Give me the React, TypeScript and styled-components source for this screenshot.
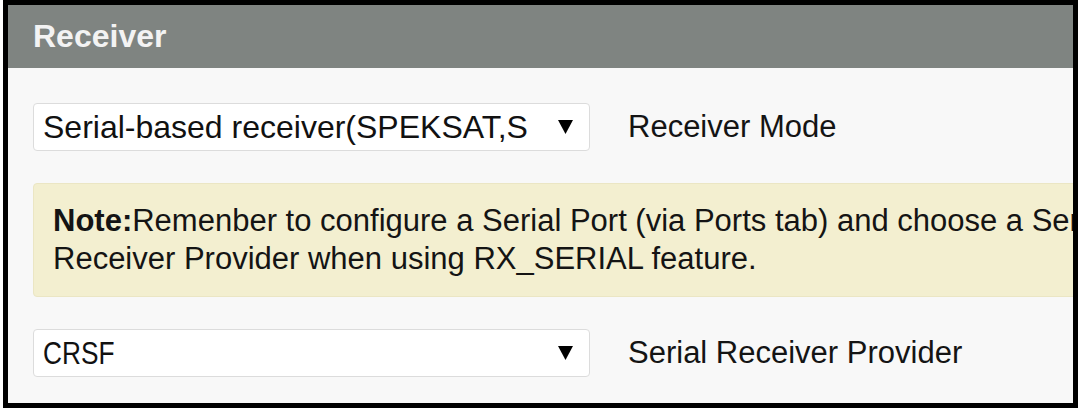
import React from "react";
import styled, { createGlobalStyle } from "styled-components";

const GlobalStyle = createGlobalStyle`
  html, body {
    margin: 0;
    padding: 0;
    background: #ffffff;
  }
  body {
    font-family: "Liberation Sans", Arial, sans-serif;
  }
`;

const Frame = styled.div`
  margin-left: 3px;
  width: 1075px;
  height: 408px;
  box-sizing: border-box;
  border: 5px solid #000;
  background: #f8f8f8;
  overflow: hidden;
  display: flex;
  flex-direction: column;
`;

const Header = styled.div`
  height: 63px;
  flex-shrink: 0;
  background: #7f8481;
  color: #f3f3f3;
  font-size: 32px;
  font-weight: 700;
  padding-left: 25px;
  display: flex;
  align-items: center;
`;

const Body = styled.div`
  display: flex;
  flex-direction: column;
  align-items: flex-start;
  padding: 35px 0 0 25px;
  gap: 32px;
`;

const Row = styled.div`
  display: flex;
  align-items: center;
  gap: 38px;
`;

const Select = styled.div`
  width: 557px;
  height: 48px;
  box-sizing: border-box;
  border: 1px solid #dcdcdc;
  border-radius: 4px;
  background: #ffffff;
  display: flex;
  align-items: center;
  padding: 0 16px 0 9px;
  color: #111;
`;

const SelectValue = styled.span<{ $narrow?: boolean }>`
  flex: 1;
  overflow: hidden;
  white-space: nowrap;
  font-size: 32px;
  max-width: 491px;
  transform-origin: left center;
  transform: ${(p) => (p.$narrow ? "scaleX(0.82)" : "none")};
`;

const Arrow = styled.svg`
  margin-left: auto;
  flex-shrink: 0;
`;

const Label = styled.span`
  font-size: 31px;
  color: #141414;
`;

const Note = styled.div`
  width: 1180px;
  flex-shrink: 0;
  box-sizing: border-box;
  padding: 18px 19px;
  background: #f3efd0;
  border: 1px solid #ebe6c4;
  border-radius: 4px;
  font-size: 31px;
  line-height: 38px;
  color: #141414;
`;

const Strong = styled.b`
  font-weight: 700;
`;

const Caret = () => (
  <Arrow width="15" height="14" viewBox="0 0 15 14">
    <polygon points="0,0 15,0 7.5,14" fill="#000" />
  </Arrow>
);

export default function App() {
  return (
    <>
      <GlobalStyle />
      <Frame>
        <Header>Receiver</Header>
        <Body>
          <Row>
            <Select>
              <SelectValue>Serial-based receiver(SPEKSAT,S</SelectValue>
              <Caret />
            </Select>
            <Label>Receiver Mode</Label>
          </Row>
          <Note>
            <Strong>Note:</Strong>Remenber to configure a Serial Port (via Ports tab) and choose a
            Serial Receiver Provider when using RX_SERIAL feature.
          </Note>
          <Row>
            <Select>
              <SelectValue $narrow>CRSF</SelectValue>
              <Caret />
            </Select>
            <Label>Serial Receiver Provider</Label>
          </Row>
        </Body>
      </Frame>
    </>
  );
}
